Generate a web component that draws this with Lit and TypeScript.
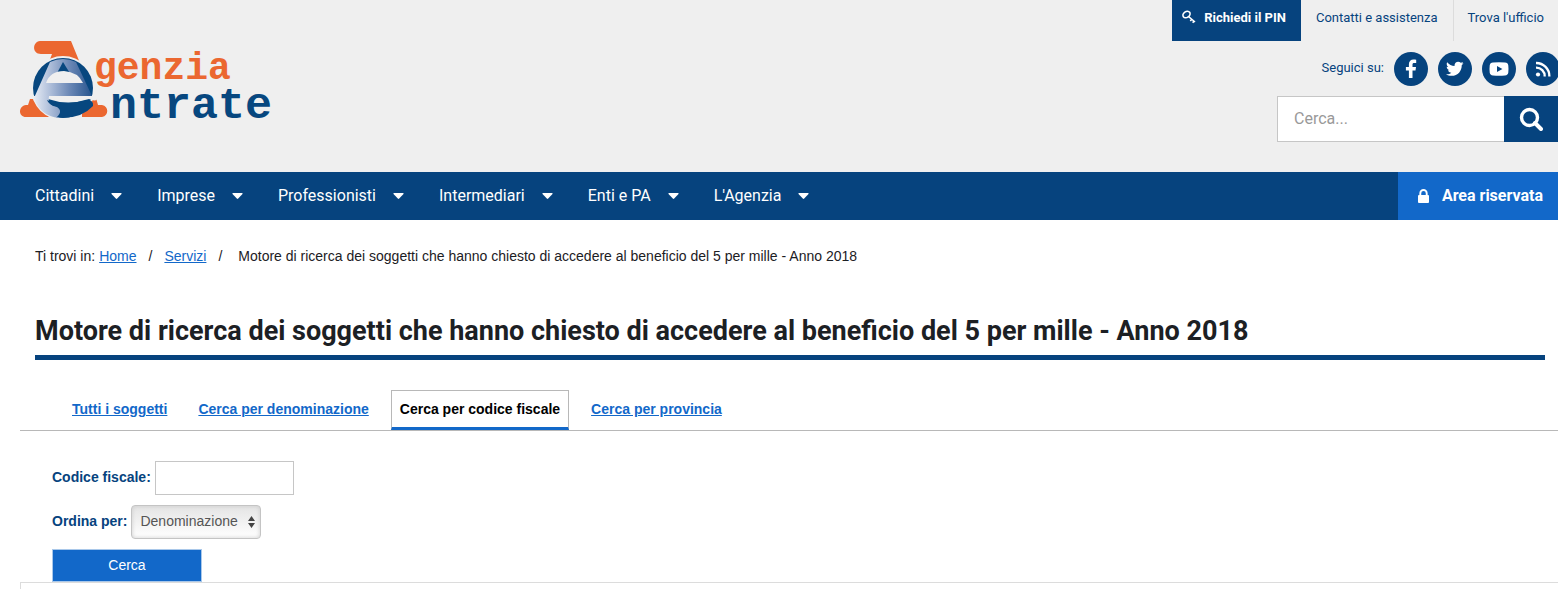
import { LitElement, html, css, svg } from "lit";
import { customElement, state } from "lit/decorators.js";

const MENU = ["Cittadini", "Imprese", "Professionisti", "Intermediari", "Enti e PA", "L'Agenzia"];
const TABS = ["Tutti i soggetti", "Cerca per denominazione", "Cerca per codice fiscale", "Cerca per provincia"];
const TITLE = "Motore di ricerca dei soggetti che hanno chiesto di accedere al beneficio del 5 per mille - Anno 2018";

const facebook = svg`<path d="M14.200 -.2v3.200h-1.900c-1.500 0-1.800.7-1.800 1.700V7h3.500l-.5 3.500h-3V18H6.900v-7.500H3.900V7h3V4.300c0-3 1.900-4.700 4.600-4.700 1.300 0 2.400.1 2.700.2z"/>`;
const twitter = svg`<path transform="scale(.0342)" d="M459.370 151.716c.325 4.548.325 9.097.325 13.645 0 138.720-105.583 298.558-298.558 298.558-59.452 0-114.680-17.219-161.137-47.106 8.447.974 16.568 1.299 25.340 1.299 49.055 0 94.213-16.568 130.274-44.832-46.132-.975-84.792-31.188-98.112-72.772 6.498.974 12.995 1.624 19.818 1.624 9.421 0 18.843-1.300 27.614-3.573-48.081-9.747-84.143-51.980-84.143-102.985v-1.299c13.969 7.797 30.214 12.670 47.431 13.319-28.264-18.843-46.781-51.005-46.781-87.391 0-19.492 5.197-37.360 14.294-52.954 51.655 63.675 129.300 105.258 216.365 109.807-1.624-7.797-2.599-15.918-2.599-24.040 0-57.828 46.782-104.934 104.934-104.934 30.213 0 57.502 12.670 76.670 33.137 23.715-4.548 46.456-13.320 66.599-25.340-7.798 24.366-24.366 44.833-46.132 57.827 21.117-2.273 41.584-8.122 60.426-16.243-14.292 20.791-32.161 39.308-52.628 54.253z"/>`;
const youtube = svg`<path fill-rule="evenodd" d="M3 2.600Q9 2 15 2.600Q18 2.800 18.300 5.500Q18.700 9 18.300 12.500Q18 15.200 15 15.400Q9 16 3 15.400Q0 15.200-.3 12.500Q-.7 9-.3 5.500Q0 2.800 3 2.600zM7 6v6l5.400-3z"/>`;
const rss = svg`<circle cx="4" cy="14.500" r="2.100"/><path fill="none" stroke="#fff" stroke-width="2.300" d="M2 7.600a8.500 8.500 0 0 1 8.700 8.900M2 3a13.200 13.200 0 0 1 13.400 13.500"/>`;
const SOCIAL = [
  { name: "Facebook", icon: facebook },
  { name: "Twitter", icon: twitter },
  { name: "YouTube", icon: youtube },
  { name: "RSS", icon: rss },
];

@customElement("app-root")
export class AppRoot extends LitElement {
  @state() private active = 2;

  static styles = css`
    :host {
      display: block;
      overflow: hidden;
      background: #fff;
      color: #1c2024;
      font: 14px/20px "Liberation Sans", Arial, sans-serif;
      --navy: #06437e;
      --blue: #1268c9;
      --title: Roboto, "Open Sans", sans-serif;
    }
    * { box-sizing: border-box; }
    a { color: var(--blue); }
    ul, ol { list-style: none; margin: 0; padding: 0; }
    svg { display: block; flex: none; }

    .header {
      display: flex;
      justify-content: space-between;
      align-items: flex-start;
      background: #efefef;
      padding-bottom: 30px;
      font-family: var(--title);
    }
    .logo { margin: 36px 0 0 16px; }
    .tools { display: flex; flex-direction: column; align-items: flex-end; }
    .utility { display: flex; height: 41px; line-height: 35px; font-size: 13px; }
    .utility a { display: flex; padding: 0 15px; color: var(--navy); text-decoration: none; }
    .utility .pin {
      background: var(--navy);
      color: #fff;
      font-weight: 700;
      padding: 0 15px 0 10px;
      gap: 8px;
    }
    .utility .pin svg { margin-top: 10px; }
    .utility .office { border-left: 1px solid #dcdcdc; padding: 0 14px; }
    .social {
      display: flex;
      align-items: center;
      gap: 10px;
      margin: 11px -2px 10px 0;
      color: var(--navy);
      font-size: 13px;
    }
    .social span { padding-bottom: 3px; }
    .social ul { display: flex; gap: 10px; }
    .social a {
      display: grid;
      place-items: center;
      width: 34px;
      height: 34px;
      border-radius: 50%;
      background: var(--navy);
      fill: #fff;
    }
    .search { display: flex; height: 46px; }
    .search input {
      width: 227px;
      border: 1px solid #c6c6c6;
      border-right: 0;
      border-radius: 0;
      padding: 0 16px 2px;
      font: 16px var(--title);
      background: #fff;
    }
    .search input::placeholder { color: #999; opacity: 1; }
    .search button {
      display: grid;
      place-items: center;
      width: 54px;
      border: 0;
      padding: 0;
      background: var(--navy);
    }

    .nav {
      display: flex;
      justify-content: space-between;
      height: 48px;
      background: var(--navy);
      font: 16px/48px var(--title);
    }
    .menu { display: flex; padding-left: 35px; gap: 35px; }
    .menu button {
      display: flex;
      align-items: center;
      gap: 17px;
      height: 48px;
      padding: 0;
      border: 0;
      background: none;
      color: #fff;
      font: inherit;
    }
    .reserved {
      display: flex;
      align-items: center;
      gap: 13px;
      padding: 0 15px 0 20px;
      background: var(--blue);
      color: #fff;
      font-weight: 700;
      text-decoration: none;
    }

    .crumbs { display: flex; padding: 26px 35px 0; }
    .crumbs ol { display: flex; margin-left: 4px; }
    .crumbs li + li::before { content: "/"; margin: 0 12px; }
    .crumbs li:last-child::before { margin-right: 16px; }
    .title {
      margin: 45px 13px 0 35px;
      padding-bottom: 4px;
      border-bottom: 5px solid var(--navy);
      font: 700 27px/40px var(--title);
    }

    .tabs {
      display: flex;
      gap: 13px;
      margin: 30px 0 0 20px;
      padding-left: 43px;
      border-bottom: 1px solid #b8b8b8;
      font-weight: 700;
    }
    .tab {
      height: 40px;
      padding: 8px 8px 0;
      border: 1px solid transparent;
      border-bottom: 3px solid transparent;
    }
    .tab.active {
      border-color: #b8b8b8 #b8b8b8 var(--blue);
      color: #000;
      text-decoration: none;
    }

    .form {
      display: flex;
      flex-direction: column;
      align-items: flex-start;
      gap: 10px;
      padding: 30px 52px 0;
    }
    .field { display: flex; align-items: center; gap: 4px; }
    .field label { color: var(--navy); font-weight: 700; padding-bottom: 2px; }
    .field input { width: 139px; height: 34px; border: 1px solid #c6c6c6; padding: 0 8px; font: inherit; }
    .select { display: grid; align-items: center; justify-items: end; }
    .select > * { grid-area: 1 / 1; }
    .select svg { margin-right: 6px; pointer-events: none; }
    .select select {
      appearance: none;
      width: 130px;
      height: 34px;
      border: 1px solid #c4c4c4;
      border-radius: 4px;
      padding: 0 8px 2px;
      background: linear-gradient(#e4e4e4, #fff);
      box-shadow: inset 0 0 4px #ccc;
      color: #555;
      font: inherit;
    }
    .submit {
      width: 150px;
      height: 33px;
      border: 1px solid #a9c8ea;
      padding: 0 0 2px;
      background: var(--blue);
      color: #fff;
      font: inherit;
    }
    .results {
      height: 7px;
      margin-left: 20px;
      border: 1px solid #dcdcdc;
      border-width: 1px 0 0 1px;
    }
  `;

  private logo() {
    return html`<svg class="logo" width="262" height="98" viewBox="0 0 262 98" role="img" aria-label="Agenzia Entrate">
      <defs>
        <linearGradient id="metal" gradientUnits="userSpaceOnUse" x1="18" x2="77" y1="0" y2="0">
          <stop offset="0" stop-color="#e6ebf4" /><stop offset=".25" stop-color="#b3c2dc" />
          <stop offset=".6" stop-color="#6b88b6" /><stop offset="1" stop-color="#23528c" />
        </linearGradient>
      </defs>
      <path fill="#eb6730" d="M24 5h31l9 22-31-1 3-8H25C16 18 16 6 24 5zM14 63h6l13 18H10C2 81 2 70 10 69h2zM66 62h14l2 7h4c7 1 7 11 0 12H66z" />
      <circle cx="47" cy="52" r="32" fill="#efefef" />
      <circle cx="47" cy="52" r="30" fill="#07477f" />
      <path fill="#efefef" d="M18 60H82Q82 67 73 63Q52 70 32 63L40 82Q22 76 17 62z" />
      <path fill="url(#metal)" d="M34 26Q47 20 60 26L76 60H33Q31 70 42 71Q48 76 43 82Q24 80 18 62z" />
      <path fill="#07477f" d="M47 26l8 13H40z" />
      <path fill="#efefef" d="M30 47Q34 35 48 35Q62 36 67 47z" />
      <path fill="#07477f" d="M31 64Q45 70 67 65Q78 62 77 70Q64 84 41 81Q48 74 39 70Q33 69 31 64z" />
      <text x="78" y="43" fill="#eb6730" font-family="Liberation Mono, monospace" font-weight="700" font-size="38">genzia</text>
      <text x="94" y="82" fill="#07477f" font-family="Liberation Mono, monospace" font-weight="700" font-size="45">ntrate</text>
    </svg>`;
  }

  render() {
    return html`
      <header class="header">
        ${this.logo()}
        <div class="tools">
          <nav class="utility" aria-label="Servizi rapidi">
            <a class="pin" href="#">
              <svg width="14" height="14" viewBox="0 0 14 14" fill="none" stroke="#fff" stroke-width="1.600">
                <ellipse cx="4.500" cy="4.500" rx="3.800" ry="2.900" transform="rotate(-35 4.500 4.500)" />
                <path d="M6.500 6.500l6.500 5.500M9.800 9.300l-1.500 1.700M12 11l-1.300 1.800" />
              </svg>
              Richiedi il PIN</a>
            <a href="#">Contatti e assistenza</a>
            <a class="office" href="#">Trova l'ufficio</a>
          </nav>
          <div class="social">
            <span>Seguici su:</span>
            <ul>
              ${SOCIAL.map((s) => html`<li><a href="#" aria-label=${s.name}>
                <svg width="18" height="18" viewBox="0 0 18 18" overflow="visible">${s.icon}</svg></a></li>`)}
            </ul>
          </div>
          <form class="search" @submit=${(e: Event) => e.preventDefault()}>
            <input type="search" placeholder="Cerca..." aria-label="Cerca nel sito" />
            <button aria-label="Cerca">
              <svg width="24" height="24" viewBox="0 0 24 24" fill="none" stroke="#fff">
                <circle cx="10.500" cy="10.500" r="8" stroke-width="3.400" />
                <path d="M16 16l6 6" stroke-width="4" stroke-linecap="round" />
              </svg>
            </button>
          </form>
        </div>
      </header>

      <nav class="nav" aria-label="Principale">
        <ul class="menu">
          ${MENU.map((m) => html`<li><button aria-haspopup="true">${m}
            <svg width="11" height="6" viewBox="0 0 11 6" fill="#fff"><path d="M1 0h9q1 0 .5 1L6.200 5.600q-.7.600-1.400 0L.5 1Q0 0 1 0z" /></svg></button></li>`)}
        </ul>
        <a class="reserved" href="#">
          <svg width="11" height="14" viewBox="0 0 11 14"><rect y="6" width="11" height="8" rx="1" fill="#fff" /><path d="M2.300 7V4.200a3.200 3.200 0 0 1 6.400 0V7" fill="none" stroke="#fff" stroke-width="1.900" /></svg>
          Area riservata</a>
      </nav>

      <main>
        <nav class="crumbs" aria-label="Percorso">
          <span>Ti trovi in:</span>
          <ol>
            <li><a href="#">Home</a></li>
            <li><a href="#">Servizi</a></li>
            <li>${TITLE}</li>
          </ol>
        </nav>
        <h1 class="title">${TITLE}</h1>
        <nav class="tabs" aria-label="Tipo di ricerca">
          ${TABS.map((t, i) => html`<a href="#" class="tab ${i === this.active ? "active" : ""}"
            @click=${(e: Event) => { e.preventDefault(); this.active = i; }}>${t}</a>`)}
        </nav>
        <form class="form" @submit=${(e: Event) => e.preventDefault()}>
          <div class="field">
            <label for="cf">Codice fiscale:</label>
            <input id="cf" type="text" />
          </div>
          <div class="field">
            <label for="order">Ordina per:</label>
            <div class="select">
              <select id="order"><option>Denominazione</option><option>Codice fiscale</option></select>
              <svg width="7" height="12" viewBox="0 0 7 12" fill="#444"><path d="M3.500 0L7 5H0zM3.500 12L7 7H0z" /></svg>
            </div>
          </div>
          <button class="submit">Cerca</button>
        </form>
        <section class="results" aria-label="Risultati"></section>
      </main>
    `;
  }
}
